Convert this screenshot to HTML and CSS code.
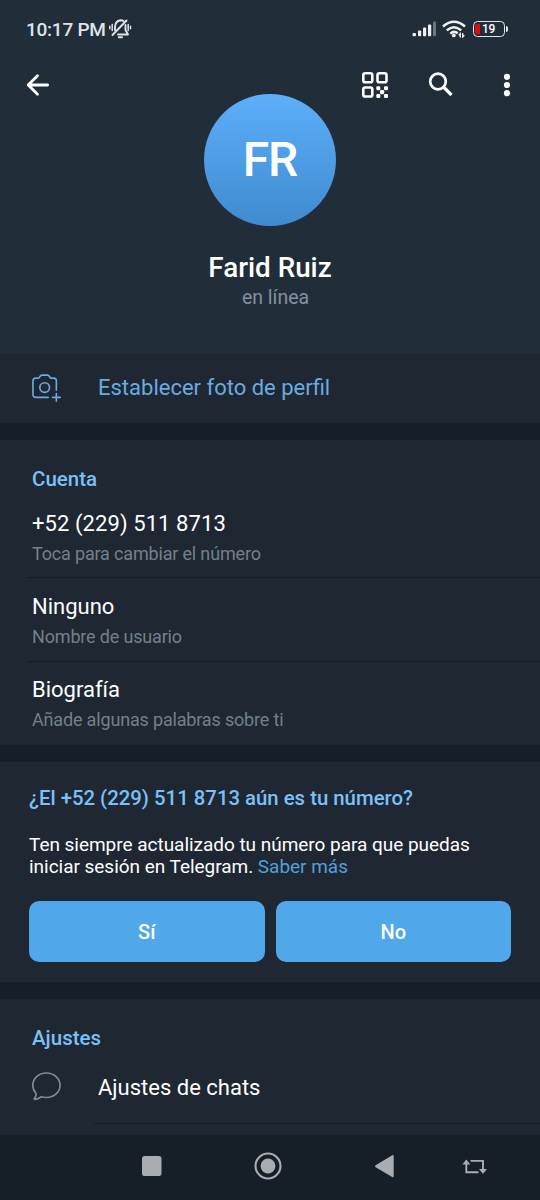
FILE: index.html
```html
<!DOCTYPE html>
<html lang="es">
<head>
<meta charset="utf-8">
<title>Telegram</title>
<link rel="stylesheet" href="styles.css">
</head>
<body>
<div class="screen">
  <header class="header">
    <div class="status">
      <span class="time">10:17 PM</span>
      <svg class="bell" width="24" height="22" viewBox="0 0 24 22" fill="none" stroke="#dfe4ea" stroke-width="1.900" stroke-linecap="round" stroke-linejoin="round">
        <path d="M7 12V9.500Q7 3 12.500 2.200Q14.500 2.200 15.500 3M17.500 7V12L20 16.500H10M10.800 19.300H14"/>
        <path d="M4.500 17L18.500 2.500"/>
        <path d="M1.800 8.200V10.800M4.200 6.500V12.500M20.200 6.500V12.500M22.500 8.200V10.800" stroke-width="1.500"/>
      </svg>
      <span class="grow"></span>
      <svg class="signal" width="25" height="16" viewBox="0 0 25 16" fill="#eef1f4">
        <rect x="0.500" y="12" width="3.500" height="3.300" rx="1.200"/>
        <rect x="6" y="9.500" width="3.200" height="5.800" rx="1"/>
        <rect x="11" y="6.500" width="3.200" height="8.800" rx="1"/>
        <rect x="16" y="3.500" width="3.200" height="11.800" rx="1"/>
        <rect x="21" y="0.500" width="3" height="14.800" rx="1" fill="#6c7580"/>
      </svg>
      <svg class="wifi" width="24" height="18" viewBox="0 0 24 18" fill="none" stroke="#eef1f4" stroke-width="2.500">
        <path d="M1 6.500Q12 -3 23 6.500M4.800 10.400Q12 4 19.200 10.400M8.300 13.600Q12 10.400 15.700 13.200"/>
        <circle cx="11.800" cy="15.400" r="1.900" fill="#eef1f4" stroke="none"/>
        <path d="M18.300 17.500V13.600L16.700 15.200M20.700 13V17L22.300 15.300" stroke-width="1.300"/>
      </svg>
      <span class="battery"><span class="charge"></span><span class="level">19</span></span>
      <span class="tip"></span>
    </div>
    <div class="toolbar">
      <svg width="24" height="24" viewBox="0 0 24 24" fill="none" stroke="#fff" stroke-width="2.800" stroke-linecap="round" stroke-linejoin="round"><path d="M21.600 12H2.200M11.500 2.700L2.200 12L11.500 21.300"/></svg>
      <span class="grow"></span>
      <svg class="qr" width="26" height="26" viewBox="0 0 26 26" fill="none" stroke="#fff" stroke-width="2.600">
        <rect x="1.300" y="1.300" width="9" height="9" rx="1.800"/><rect x="15.500" y="1.300" width="9" height="9" rx="1.800"/><rect x="1.300" y="15.500" width="9" height="9" rx="1.800"/>
        <g fill="#fff" stroke="none"><rect x="14.300" y="14.300" width="4" height="4" rx="1.200"/><rect x="22" y="14.300" width="4" height="4" rx="1.200"/><rect x="18" y="18" width="4.200" height="4.200" rx="1.200"/><rect x="14.300" y="22" width="4" height="4" rx="1.200"/><rect x="22" y="22" width="4" height="4" rx="1.200"/></g>
      </svg>
      <svg class="search" width="26" height="26" viewBox="0 0 26 26" fill="none" stroke="#fff" stroke-width="2.700"><circle cx="10" cy="9.500" r="7.800"/><path d="M15.500 15L23.500 23" stroke-width="3.200"/></svg>
      <svg class="more" width="8" height="24" viewBox="0 0 8 24" fill="#fff"><circle cx="4" cy="3.800" r="3.100"/><circle cx="4" cy="12" r="3.100"/><circle cx="4" cy="20.200" r="3.100"/></svg>
    </div>
    <div class="profile">
      <div class="avatar"><span class="initials">FR</span></div>
      <h1 class="name">Farid Ruiz</h1>
      <div class="presence">en línea</div>
    </div>
  </header>

  <section class="photo">
    <svg width="29" height="29" viewBox="0 0 30 30" fill="none" stroke="#6aabe0" stroke-width="1.700" stroke-linecap="round" stroke-linejoin="round">
      <path d="M16.800 24.200H4Q1 24.200 1 21.200V7Q1 4.200 3.800 4.200H6.200Q7.300 4.200 7.900 3.100Q9 1.200 10.300 1.200H16Q17.300 1.200 18.300 3.100Q18.900 4.200 20 4.200H22.300Q25.200 4.200 25.200 7V16.700"/>
      <circle cx="13.100" cy="14" r="5"/><path d="M25.200 20.200V28.200M21.200 24.200H29.200"/>
    </svg>
    <span class="photo-label">Establecer foto de perfil</span>
  </section>

  <section class="account">
    <h2 class="heading">Cuenta</h2>
    <div class="item item-phone"><div class="value phone">+52 (229) 511 8713</div><div class="hint">Toca para cambiar el número</div></div>
    <div class="item item-user"><div class="value">Ninguno</div><div class="hint">Nombre de usuario</div></div>
    <div class="item item-bio"><div class="value">Biografía</div><div class="hint">Añade algunas palabras sobre ti</div></div>
  </section>

  <section class="check">
    <h2 class="question">¿El +52 (229) 511 8713 aún es tu número?</h2>
    <p class="body">Ten siempre actualizado tu número para que puedas<br>iniciar sesión en Telegram. <a class="link">Saber más</a></p>
    <div class="buttons"><button class="button">Sí</button><button class="button">No</button></div>
  </section>

  <section class="settings">
    <h2 class="heading">Ajustes</h2>
    <div class="setting">
      <svg class="chat" width="29" height="29" viewBox="0 0 30 30" fill="none" stroke="#7f8a95" stroke-width="1.700" stroke-linejoin="round"><path d="M14.900 1C22.800 1 29 6.600 29 13.700C29 20.800 22.800 26.400 14.900 26.400Q12 26.400 9.700 25.600Q6.500 28.100 2.900 28.300Q2 28.200 2.500 27.400Q4.500 24.700 4.200 22.300Q0.800 18.500 0.800 13.700C0.800 6.600 7 1 14.900 1Z"/></svg>
      <span class="value setting-label">Ajustes de chats</span>
    </div>
    <div class="divider"></div>
  </section>

  <nav class="nav">
    <svg width="540" height="65" viewBox="0 0 540 65" fill="#a9adb2">
      <rect x="142" y="21" width="19.500" height="20" rx="2.800"/>
      <circle cx="268" cy="31" r="7.400"/><circle cx="268" cy="31" r="12.500" fill="none" stroke="#a9adb2" stroke-width="2.100"/>
      <path d="M375.600 30.200L392.200 20.200Q393.700 19.600 393.700 21.200V41.200Q393.700 42.700 392.200 42L375.600 32.200Q374.300 31.200 375.600 30.200Z"/>
      <g fill="none" stroke="#a9adb2" stroke-width="1.900"><path d="M470.500 25.900H483V36M478.500 37.200H466.300V27"/></g>
      <path d="M462.300 29.500L466.300 24.500L470.300 29.500ZM479 34L483 39L487 34Z"/>
    </svg>
  </nav>
</div>
</body>
</html>
```
FILE: styles.css
```css
* { box-sizing: border-box; }
body { margin: 0; background: #161e27; font-family: Roboto, "Noto Sans", sans-serif; }
h1, h2, p { margin: 0; font-weight: 500; }
svg { display: block; flex: none; }
.screen { width: 540px; height: 1200px; overflow: hidden; display: flex; flex-direction: column; }
.screen > * { flex: none; }
.grow { flex: 1; }

.header { height: 354px; background: #222d3a; }
.status { display: flex; align-items: center; height: 58px; padding: 0 32px 0 26px; }
.time { font-size: 19px; font-weight: 500; color: #dfe4ea; letter-spacing: -0.25px; width: 82px; white-space: nowrap; }
.wifi { margin-left: 5px; }
.battery { display: flex; align-items: center; width: 32px; height: 16px; margin-left: 7px; border: 1.5px solid #e3e7ec; border-radius: 4.5px; padding: 1px; color: #fff; }
.charge { width: 5px; height: 10px; background: #e00d10; border-radius: 2px 0 0 2px; }
.level { font-size: 12px; font-weight: 500; line-height: 12px; letter-spacing: -0.3px; margin-left: 2px; }
.tip { width: 2px; height: 6px; margin-left: 1px; border-radius: 0 2px 2px 0; background: #e3e7ec; }

.toolbar { display: flex; align-items: center; height: 36px; padding: 17px 29px 0 26px; }
.search { margin-left: 40px; }
.more { margin-left: 49px; }
.profile { display: flex; flex-direction: column; align-items: center; }
.avatar { display: flex; align-items: center; justify-content: center; width: 132px; height: 132px; margin-top: 0.4px; border-radius: 50%; background: linear-gradient(#5caffa, #408acf); }
.initials { padding-bottom: 2px; color: #fff; font-size: 48px; font-weight: 500; letter-spacing: -1px; }
.name { margin-top: 24.6px; font-size: 27.8px; line-height: 34px; color: #fff; }
.presence { padding-left: 11px; font-size: 19.5px; line-height: 26px; color: #8290a0; }

.photo { display: flex; align-items: center; gap: 37.5px; height: 69px; padding: 0 31.5px; background: #1e2732; }
.photo-label { padding-bottom: 2px; font-size: 22px; color: #6aabe0; }

.account { height: 305px; margin-top: 17px; padding-top: 26px; background: #1e2732; }
.heading { padding-left: 32px; font-size: 20.5px; line-height: 26px; color: #7cc0f8; }
.item { margin-left: 28px; padding-left: 4px; }
.item + .item { border-top: 1px solid #151c24; }
.item-phone { height: 85px; padding-top: 18px; }
.item-user { height: 84px; padding-top: 15px; }
.item-bio { height: 84px; padding-top: 14px; }
.value { font-size: 22px; line-height: 28px; color: #fff; }
.phone { letter-spacing: 0.08px; }
.hint { margin-top: 4px; font-size: 18px; line-height: 24px; letter-spacing: -0.17px; color: #74808b; }

.check { height: 220px; margin-top: 17px; padding: 23px 29px 0; background: #1e2732; }
.question { font-size: 20.35px; line-height: 26px; color: #7cc0f8; white-space: nowrap; }
.body { margin-top: 22.5px; font-size: 19px; font-weight: 400; line-height: 22.5px; letter-spacing: -0.03px; color: #fff; white-space: nowrap; }
.link { color: #559fd8; }
.buttons { display: flex; gap: 11px; margin-top: 22.5px; }
.button { flex: 1; height: 60.5px; padding: 1px 0 0; border: 0; border-radius: 10px; background: #50a7ea; color: #fff; font: 500 20px Roboto, sans-serif; }

.settings { height: 136px; margin-top: 17px; padding-top: 26px; background: #1e2732; }
.setting { display: flex; align-items: center; gap: 37.5px; height: 72px; padding: 0 31.5px; }
.chat { margin-bottom: 1px; }
.setting-label { padding-top: 1px; }
.divider { height: 1px; margin-left: 94px; background: #151c24; }
.nav { height: 65px; background: #161e27; }
```
